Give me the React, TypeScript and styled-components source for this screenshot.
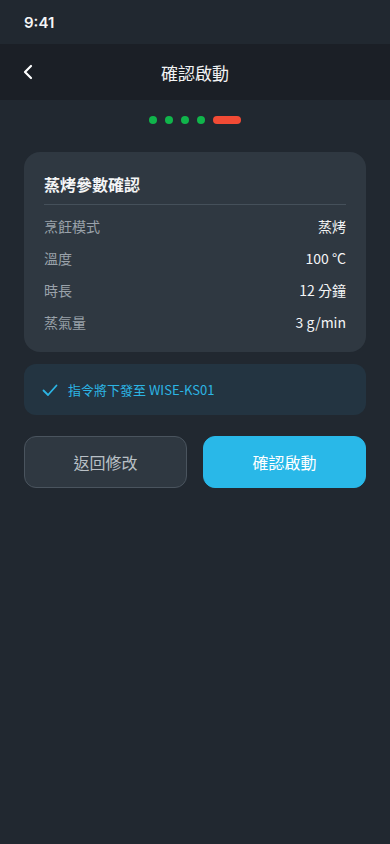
import styled, { createGlobalStyle } from 'styled-components';

const GlobalStyle = createGlobalStyle`
    html, body {
        margin: 0;
        padding: 0;
        background: #212830;
    }
    body {
        font-family: "Noto Sans CJK TC", "Noto Sans", sans-serif;
        -webkit-font-smoothing: antialiased;
    }
`;

const params = [
    { label: '烹飪模式', value: '蒸烤' },
    { label: '溫度', value: '100 °C' },
    { label: '時長', value: '12 分鐘' },
    { label: '蒸氣量', value: '3 g/min' },
];

const App: React.FC = () => {
    return (
        <StyledPage>
            <GlobalStyle />
            <StyledStatusBar>9:41</StyledStatusBar>
            <StyledHeader>
                <StyledBackButton aria-label="back">
                    <svg width="14" height="18" viewBox="0 0 14 18" fill="none">
                        <path d="M9 3 L3 9 L9 15" stroke="#ffffff" strokeWidth="2.2" strokeLinecap="round" strokeLinejoin="round" />
                    </svg>
                </StyledBackButton>
                <StyledTitle>確認啟動</StyledTitle>
            </StyledHeader>
            <StyledSteps>
                <StyledDot />
                <StyledDot />
                <StyledDot />
                <StyledDot />
                <StyledDot $active />
            </StyledSteps>
            <StyledContent>
                <StyledCard>
                    <StyledCardTitle>蒸烤參數確認</StyledCardTitle>
                    <StyledRows>
                        {params.map((item) => (
                            <StyledRow key={item.label}>
                                <StyledLabel>{item.label}</StyledLabel>
                                <StyledValue>{item.value}</StyledValue>
                            </StyledRow>
                        ))}
                    </StyledRows>
                </StyledCard>
                <StyledNotice>
                    <svg width="16" height="16" viewBox="0 0 16 16" fill="none">
                        <path d="M1.5 8.5 L6 13 L14.5 3.5" stroke="#2cb5e4" strokeWidth="1.8" strokeLinecap="round" strokeLinejoin="round" />
                    </svg>
                    <span>指令將下發至 WISE-KS01</span>
                </StyledNotice>
                <StyledButtons>
                    <StyledButton>返回修改</StyledButton>
                    <StyledButton $primary>確認啟動</StyledButton>
                </StyledButtons>
            </StyledContent>
        </StyledPage>
    );
};

const StyledPage = styled.div`
    min-height: 844px;
    background: #212830;
    color: #ffffff;
`;

const StyledStatusBar = styled.div`
    height: 44px;
    display: flex;
    align-items: center;
    padding-left: 24px;
    font-family: Inter, "Noto Sans", sans-serif;
    font-size: 15px;
    font-weight: 600;
    color: #f4f5f6;
`;

const StyledHeader = styled.div`
    position: relative;
    height: 56px;
    display: flex;
    align-items: center;
    justify-content: center;
    background: #1b1f26;
`;

const StyledBackButton = styled.div`
    position: absolute;
    left: 20px;
    top: 19px;
    width: 18px;
    height: 18px;
    display: flex;
    align-items: center;
    justify-content: center;
`;

const StyledTitle = styled.div`
    font-size: 17px;
    font-weight: 400;
    color: #f2f3f4;
`;

const StyledSteps = styled.div`
    height: 40px;
    display: flex;
    align-items: center;
    justify-content: center;
    gap: 8px;
`;

const StyledDot = styled.div<{ $active?: boolean }>`
    width: ${(p) => (p.$active ? '28px' : '8px')};
    height: 8px;
    border-radius: 4px;
    background: ${(p) => (p.$active ? '#f24b35' : '#10b54b')};
`;

const StyledContent = styled.div`
    padding: 12px 24px 0;
    display: flex;
    flex-direction: column;
`;

const StyledCard = styled.div`
    background: #2f3841;
    border-radius: 16px;
    padding: 20px 20px 14px;
`;

const StyledCardTitle = styled.div`
    font-size: 16px;
    font-weight: 700;
    color: #f4f5f6;
    line-height: 24px;
    padding-bottom: 8px;
    border-bottom: 1px solid #45505a;
`;

const StyledRows = styled.div`
    display: flex;
    flex-direction: column;
    padding-top: 5px;
`;

const StyledRow = styled.div`
    height: 32px;
    display: flex;
    align-items: center;
    justify-content: space-between;
    font-size: 14px;
`;

const StyledLabel = styled.span`
    color: #9aa2aa;
`;

const StyledValue = styled.span`
    color: #f4f5f6;
    font-weight: 400;
`;

const StyledNotice = styled.div`
    margin-top: 12px;
    height: 51px;
    display: flex;
    align-items: center;
    gap: 10px;
    padding: 0 18px;
    background: #233441;
    border-radius: 12px;
    font-size: 13px;
    color: #2cb5e4;
`;

const StyledButtons = styled.div`
    margin-top: 21px;
    display: grid;
    grid-template-columns: 1fr 1fr;
    gap: 16px;
`;

const StyledButton = styled.div<{ $primary?: boolean }>`
    height: 52px;
    box-sizing: border-box;
    display: flex;
    align-items: center;
    justify-content: center;
    border-radius: 12px;
    font-size: 16px;
    font-weight: 400;
    background: ${(p) => (p.$primary ? '#29b8e8' : '#2f3841')};
    border: 1px solid ${(p) => (p.$primary ? '#29b8e8' : '#4a545e')};
    color: ${(p) => (p.$primary ? '#ffffff' : '#b9c0c6')};
`;

export default App;
